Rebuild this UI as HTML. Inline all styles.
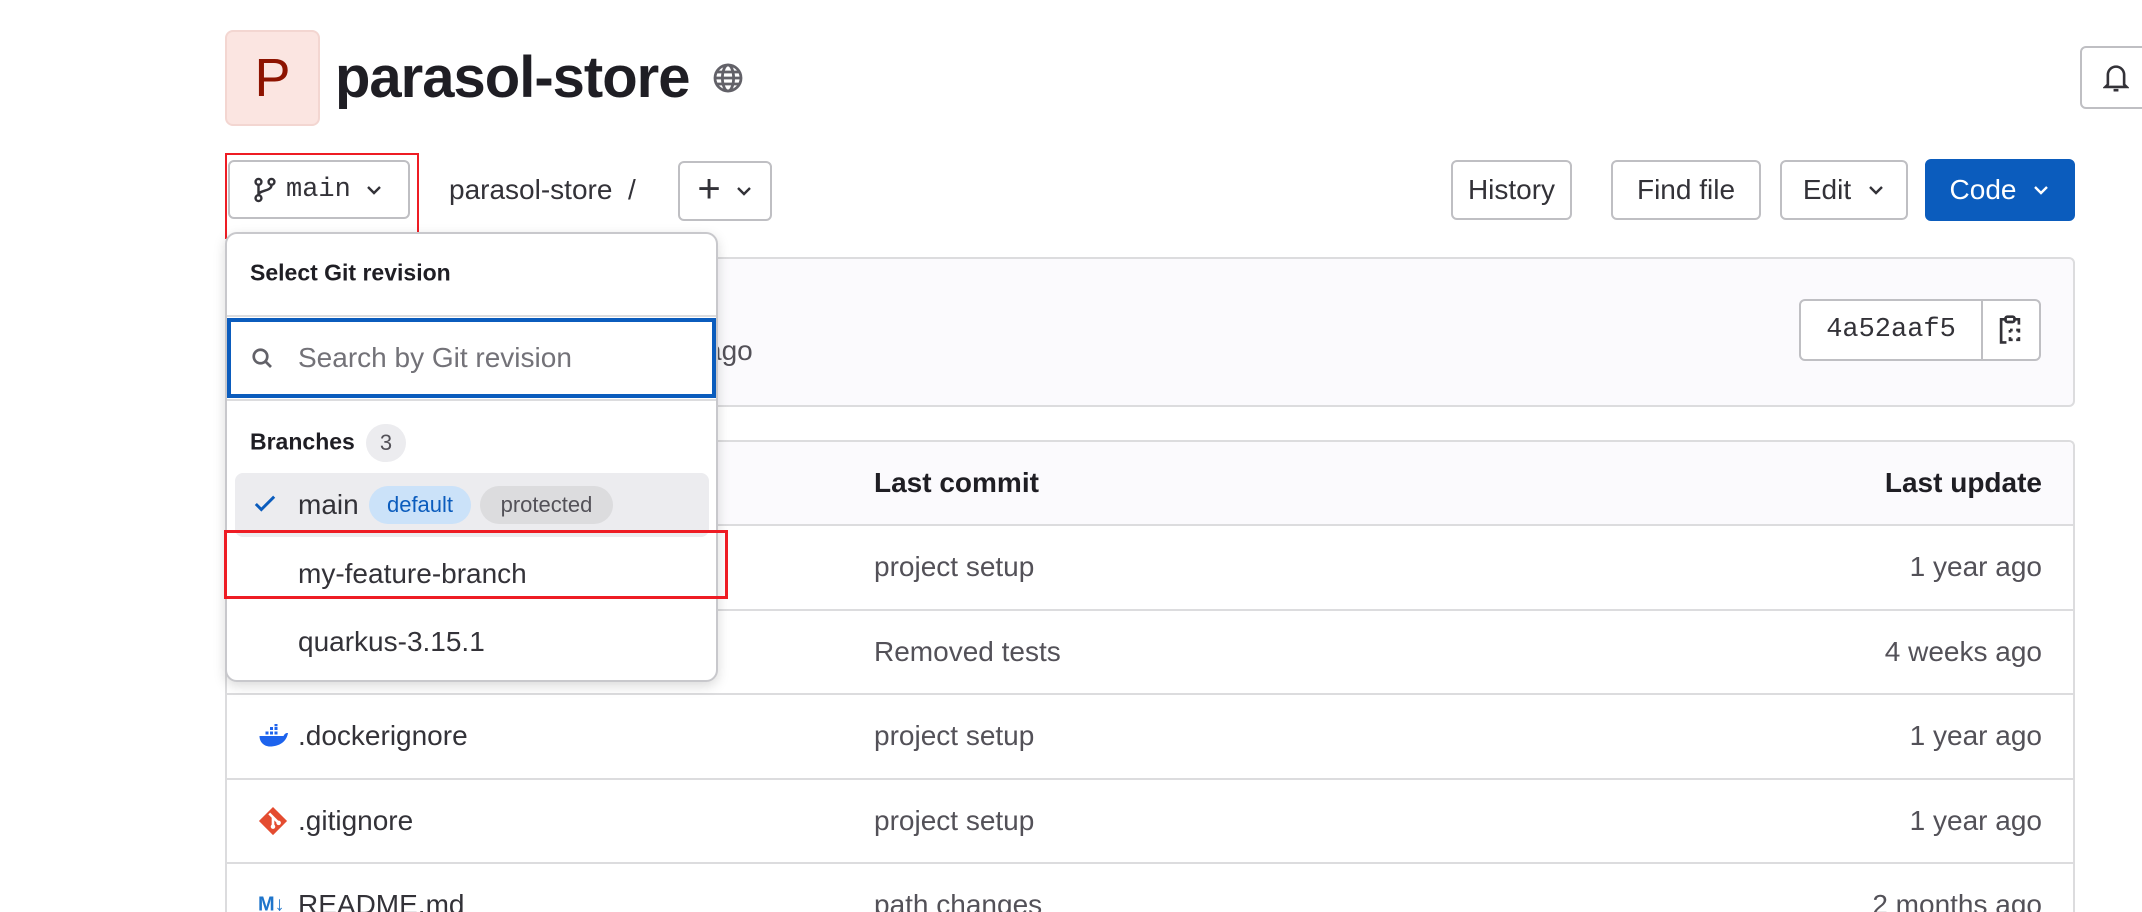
<!DOCTYPE html>
<html style="width:2142px;height:912px;overflow:hidden"><head><meta charset="utf-8"><style>
*{box-sizing:border-box;margin:0;padding:0}
body{width:2142px;height:912px;overflow:hidden;background:#fff;font-family:"Liberation Sans",sans-serif;color:#333238;position:relative}
.a{position:absolute}
.btn{position:absolute;border:2px solid #bfbfc3;border-radius:6px;background:#fff;display:flex;align-items:center;justify-content:center;font-size:28px;color:#333238}
.row{position:absolute;left:225px;width:1850px;border-top:2px solid #dcdcde;height:48px}
.t{position:absolute;font-size:28px;transform:translateY(-50%);white-space:nowrap}
.g{color:#535158}
</style></head><body>
<div class="a" style="left:225px;top:30px;width:95px;height:96px;background:#fbe5e1;border:2px solid #f3d6d1;border-radius:8px;color:#8d1300;font-size:54px;display:flex;align-items:center;justify-content:center">P</div>
<div class="a" style="left:335px;top:44px;font-size:58px;font-weight:bold;color:#1f1e24;letter-spacing:-1px">parasol-store</div>
<svg class="a" style="left:712px;top:62px" width="32" height="32" viewBox="0 0 16 16" fill="none" stroke="#626168" stroke-width="1.4"><circle cx="8" cy="8" r="6.5"/><ellipse cx="8" cy="8" rx="2.8" ry="6.5"/><path d="M1.5 8h13M2.5 5h11M2.5 11h11"/></svg>
<div class="btn" style="left:2080px;top:46px;width:80px;height:63px"><svg width="26" height="30" viewBox="0 0 16 18" fill="none" stroke="#333238" stroke-width="1.6" style="margin-left:-8px"><path d="M3 13V7a5 5 0 0110 0v6l1.5 1.5h-13z"/><path d="M6.5 16.5h3"/></svg></div>

<div class="btn" style="left:228px;top:160px;width:182px;height:59px;font-family:'Liberation Mono',monospace;font-size:27px;justify-content:flex-start;padding-left:22px">
<svg width="26" height="28" viewBox="0 0 16 16" fill="none" stroke="#333238" stroke-width="1.5"><circle cx="4" cy="3" r="1.8"/><circle cx="4" cy="13" r="1.8"/><circle cx="12" cy="3" r="1.8"/><path d="M4 5v6M12 5c0 4-8 3-8 6"/></svg>
<span style="margin-left:8px">main</span>
<svg style="margin-left:14px" width="18" height="12" viewBox="0 0 12 8" fill="none" stroke="#333238" stroke-width="1.6"><path d="M2 2l4 4 4-4"/></svg></div>
<div class="a" style="left:225px;top:153px;width:194px;height:86px;border:2px solid #ee1c24"></div>
<div class="a" style="left:449px;top:174px;font-size:28px">parasol-store &nbsp;/</div>
<div class="btn" style="left:678px;top:161px;width:94px;height:60px"><span style="font-size:40px;font-weight:300;margin-top:-4px">+</span><svg style="margin-left:14px" width="18" height="12" viewBox="0 0 12 8" fill="none" stroke="#333238" stroke-width="1.6"><path d="M2 2l4 4 4-4"/></svg></div>

<div class="btn" style="left:1451px;top:160px;width:121px;height:60px">History</div>
<div class="btn" style="left:1611px;top:160px;width:150px;height:60px">Find file</div>
<div class="btn" style="left:1780px;top:160px;width:128px;height:60px">Edit<svg style="margin-left:16px" width="18" height="12" viewBox="0 0 12 8" fill="none" stroke="#333238" stroke-width="1.6"><path d="M2 2l4 4 4-4"/></svg></div>
<div class="btn" style="left:1925px;top:159px;width:150px;height:62px;background:#0b5cbd;border-color:#0b5cbd;color:#fff">Code<svg style="margin-left:16px" width="18" height="12" viewBox="0 0 12 8" fill="none" stroke="#fff" stroke-width="1.6"><path d="M2 2l4 4 4-4"/></svg></div>

<div class="a" style="left:225px;top:257px;width:1850px;height:150px;background:#fbfafd;border:2px solid #dcdcde;border-radius:6px"></div>
<div class="t g" style="left:706px;top:351px">ago</div>
<div class="btn" style="left:1799px;top:299px;width:242px;height:62px;justify-content:flex-start">
<span style="font-family:'Liberation Mono',monospace;font-size:27px;width:180px;text-align:center">4a52aaf5</span>
<div style="width:2px;height:58px;background:#bfbfc3"></div>
<svg style="margin-left:14px" width="26" height="32" viewBox="0 0 14 18" fill="none" stroke="#333238" stroke-width="1.5"><path d="M4 3H2v13h3M10 3h2v3"/><rect x="4.5" y="1.5" width="5" height="3" rx="1"/><path d="M7 9h1.5M10.5 9H12v1.5M12 13v1.5h-1.5M8.5 14.5H7V13M7 10.5V9" /></svg></div>

<div class="a" style="left:225px;top:440px;width:1850px;height:480px;border:2px solid #dcdcde;border-bottom:none;border-radius:6px 6px 0 0"></div>
<div class="a" style="left:227px;top:442px;width:1846px;height:83px;background:#fbfafd;border-radius:6px 6px 0 0"></div>
<div class="t" style="left:874px;top:483px;font-weight:bold;color:#1f1e24">Last commit</div>
<div class="t" style="right:100px;top:483px;font-weight:bold;color:#1f1e24">Last update</div>
<div class="row" style="top:524px"></div><div class="row" style="top:609px"></div><div class="row" style="top:693px"></div><div class="row" style="top:778px"></div><div class="row" style="top:862px"></div>
<div class="t g" style="left:874px;top:567px">project setup</div><div class="t g" style="right:100px;top:567px">1 year ago</div>
<div class="t g" style="left:874px;top:652px">Removed tests</div><div class="t g" style="right:100px;top:652px">4 weeks ago</div>
<div class="t g" style="left:874px;top:736px">project setup</div><div class="t g" style="right:100px;top:736px">1 year ago</div>
<div class="t g" style="left:874px;top:821px">project setup</div><div class="t g" style="right:100px;top:821px">1 year ago</div>
<div class="t g" style="left:874px;top:905px">path changes</div><div class="t g" style="right:100px;top:905px">2 months ago</div>
<svg class="a" style="left:258px;top:724px" width="30" height="24" viewBox="0 0 20 16"><path d="M1 8h16c1-2 2-2 3-2-1 6-6 9-12 9C4 15 1 12 1 8z" fill="#1d63ed"/><rect x="5" y="5" width="2" height="2" fill="#1d63ed"/><rect x="8" y="5" width="2" height="2" fill="#1d63ed"/><rect x="11" y="5" width="2" height="2" fill="#1d63ed"/><rect x="8" y="2" width="2" height="2" fill="#1d63ed"/><rect x="11" y="2" width="2" height="2" fill="#1d63ed"/><rect x="11" y="0" width="2" height="1.5" fill="#1d63ed"/></svg>
<div class="t" style="left:298px;top:736px">.dockerignore</div>
<svg class="a" style="left:258px;top:806px" width="30" height="30" viewBox="0 0 16 16"><path d="M8 0.5L15.5 8 8 15.5 0.5 8z" fill="#e44c30"/><path d="M6 4l2 2v5M8 6l3 3" stroke="#fff" stroke-width="1.4" fill="none"/><circle cx="8" cy="11" r="1.2" fill="#fff"/><circle cx="11" cy="9" r="1.2" fill="#fff"/></svg>
<div class="t" style="left:298px;top:821px">.gitignore</div>
<div class="t" style="left:258px;top:905px;font-size:20px;font-weight:bold;color:#1f75cb">M↓</div>
<div class="t" style="left:298px;top:905px">README.md</div>

<div class="a" style="left:225px;top:232px;width:493px;height:450px;background:#fff;border:2px solid #c8c8cc;border-radius:12px;box-shadow:0 4px 12px rgba(0,0,0,.15)"></div>
<div class="t" style="left:250px;top:273px;font-size:23px;font-weight:bold;color:#1f1e24">Select Git revision</div>
<div class="a" style="left:227px;top:315px;width:489px;height:2px;background:#dcdcde"></div>
<div class="a" style="left:227px;top:318px;width:489px;height:80px;border:4px solid #0b5cbd"></div>
<svg class="a" style="left:250px;top:346px" width="24" height="24" viewBox="0 0 16 16" fill="none" stroke="#626168" stroke-width="1.8"><circle cx="7" cy="7" r="4.5"/><path d="M10.5 10.5L14 14"/></svg>
<div class="t" style="left:298px;top:358px;color:#737278">Search by Git revision</div>
<div class="a" style="left:227px;top:399px;width:489px;height:2px;background:#dcdcde"></div>
<div class="t" style="left:250px;top:442px;font-size:23px;font-weight:bold;color:#1f1e24">Branches</div>
<div class="a" style="left:366px;top:424px;width:40px;height:38px;border-radius:19px;background:#ececef;font-size:22px;color:#535158;display:flex;align-items:center;justify-content:center">3</div>
<div class="a" style="left:235px;top:473px;width:474px;height:64px;background:#ececef;border-radius:8px"></div>
<svg class="a" style="left:254px;top:494px" width="22" height="20" viewBox="0 0 12 10" fill="none" stroke="#0b5cbd" stroke-width="1.6"><path d="M1 5l3 3 7-7"/></svg>
<div class="t" style="left:298px;top:505px">main</div>
<div class="a" style="left:369px;top:486px;width:102px;height:38px;border-radius:19px;background:#cbe2f9;color:#0b5cbd;font-size:22px;display:flex;align-items:center;justify-content:center">default</div>
<div class="a" style="left:480px;top:486px;width:133px;height:38px;border-radius:19px;background:#dcdcde;color:#535158;font-size:22px;display:flex;align-items:center;justify-content:center">protected</div>
<div class="t" style="left:298px;top:574px">my-feature-branch</div>
<div class="a" style="left:224px;top:530px;width:504px;height:69px;border:3px solid #ee1c24"></div>
<div class="t" style="left:298px;top:642px">quarkus-3.15.1</div>
</body></html>
